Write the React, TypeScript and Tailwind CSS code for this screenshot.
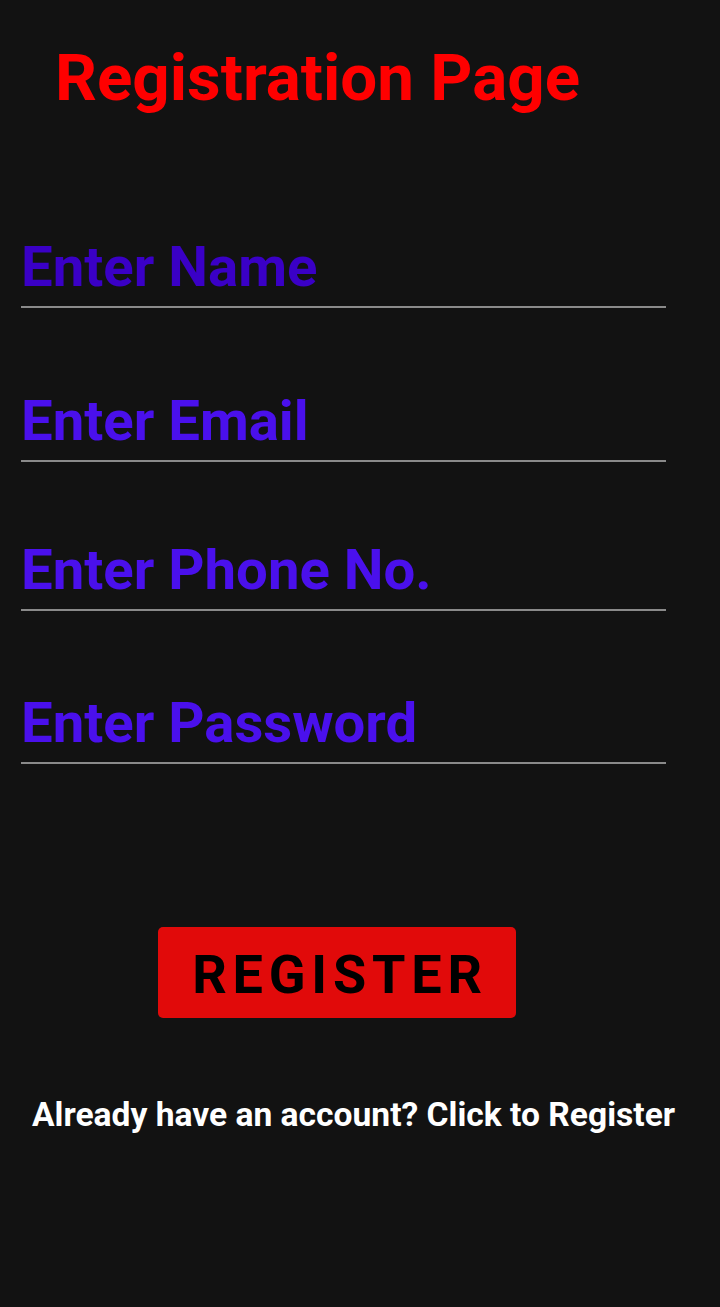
import React from "react";

export default function App() {
  const fields = [
    { ph: "Enter Name", color: "placeholder:text-[#3a00c6]", mt: "mt-[0px]" },
    { ph: "Enter Email", color: "placeholder:text-[#4a10ec]", mt: "mt-[85px]" },
    { ph: "Enter Phone No.", color: "placeholder:text-[#4a10ec]", mt: "mt-[80px]" },
    { ph: "Enter Password", color: "placeholder:text-[#4a10ec]", mt: "mt-[84px]" },
  ];
  return (
    <div
      className="w-[720px] h-[1307px] bg-[#121212] flex flex-col"
      style={{ fontFamily: "Roboto, 'Liberation Sans', sans-serif" }}
    >
      <h1 className="mt-[45px] ml-[55px] text-[65.5px] leading-none font-bold text-[#ff0000]">
        Registration Page
      </h1>
      <div className="mt-[128px] ml-[21px] w-[645px] flex flex-col">
        {fields.map((f) => (
          <div key={f.ph} className={`${f.mt} border-b-2 border-[#8a8a8a] pb-[11px]`}>
            <input
              placeholder={f.ph}
              className={`w-full h-[56px] bg-transparent outline-none text-[56.3px] leading-none font-bold ${f.color}`}
              style={{ fontFamily: "Roboto, 'Liberation Sans', sans-serif" }}
            />
          </div>
        ))}
      </div>
      <button className="mt-[163px] ml-[158px] w-[358px] h-[91px] rounded-[5px] bg-[#e10a0a] text-black font-bold text-[54px] leading-none tracking-[5.8px] pl-[6px] pt-[5px] flex items-center justify-center">
        REGISTER
      </button>
      <p className="mt-[80px] ml-[32px] text-white font-bold text-[33.6px] leading-none whitespace-nowrap">
        Already have an account? Click to Register
      </p>
    </div>
  );
}
